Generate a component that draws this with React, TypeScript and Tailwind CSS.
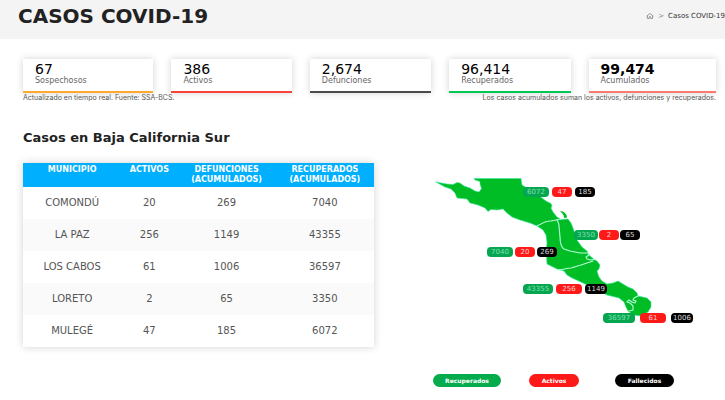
import React from 'react'

interface Stat {
  value: string
  label: string
  border: string
  weight: string
}

const stats: Stat[] = [
  { value: '67', label: 'Sospechosos', border: 'border-[#ffa92e]', weight: 'font-normal' },
  { value: '386', label: 'Activos', border: 'border-[#f9423a]', weight: 'font-normal' },
  { value: '2,674', label: 'Defunciones', border: 'border-[#4a4a4a]', weight: 'font-normal' },
  { value: '96,414', label: 'Recuperados', border: 'border-[#00c853]', weight: 'font-normal' },
  { value: '99,474', label: 'Acumulados', border: 'border-[#fb7a70]', weight: 'font-bold' },
]

interface Municipio {
  name: string
  activos: number
  defunciones: number
  recuperados: number
  // lugar sobre el mapa y ancho de cada etiqueta
  pin: string
  widths: [string, string, string]
}

const municipios: Municipio[] = [
  { name: 'COMONDÚ', activos: 20, defunciones: 269, recuperados: 7040, pin: 'left-[57px] top-[77px] gap-[2px]', widths: ['w-[26px]', 'w-[20px]', 'w-[20px]'] },
  { name: 'LA PAZ', activos: 256, defunciones: 1149, recuperados: 43355, pin: 'left-[93px] top-[114px] gap-[3px]', widths: ['w-[30px]', 'w-[26px]', 'w-[22px]'] },
  { name: 'LOS CABOS', activos: 61, defunciones: 1006, recuperados: 36597, pin: 'left-[173px] top-[143px] gap-[5px]', widths: ['w-[32px]', 'w-[26px]', 'w-[22px]'] },
  { name: 'LORETO', activos: 2, defunciones: 65, recuperados: 3350, pin: 'left-[144px] top-[60px] gap-px', widths: ['w-[24px]', 'w-[20px]', 'w-[20px]'] },
  { name: 'MULEGÉ', activos: 47, defunciones: 185, recuperados: 6072, pin: 'left-[93px] top-[17px] gap-[3px]', widths: ['w-[26px]', 'w-[20px]', 'w-[20px]'] },
]

const HomeIcon: React.FC = () => (
  <svg viewBox="0 0 16 12" className="w-2 h-[6px]" fill="none" stroke="#777" strokeWidth="1.4">
    <path d="M1 6.5 8 1l7 5.5M3 5.5V11h3.5V7.5h3V11H13V5.5" />
  </svg>
)

const StatCard: React.FC<{ stat: Stat }> = ({ stat }) => (
  <div className={`bg-white border-b-2 shadow-[0_0_7px_rgba(0,0,0,0.18)] pl-3 pt-[2px] pb-[6px] ${stat.border}`}>
    <p className={`text-[14px] leading-4 text-black ${stat.weight}`}>{stat.value}</p>
    <p className="text-[8px] leading-2 text-[#666]">{stat.label}</p>
  </div>
)

const MapPin: React.FC<{ municipio: Municipio }> = ({ municipio }) => {
  const { pin, widths, recuperados, activos, defunciones } = municipio
  const badge = 'h-[10px] rounded-[4px] text-center text-[7px] leading-[10px]'
  return (
    <div className={`absolute flex ${pin}`}>
      <span className={`${badge} ${widths[0]} bg-[#06a650] text-[#7ee0ac]`}>{recuperados}</span>
      <span className={`${badge} ${widths[1]} bg-[#ff1a1a] text-[#ffd0d0]`}>{activos}</span>
      <span className={`${badge} ${widths[2]} bg-black text-[#ddd]`}>{defunciones}</span>
    </div>
  )
}

const BajaMap: React.FC = () => (
  <div className="relative w-[270px] h-40">
    <svg viewBox="430 170 270 160" className="w-full h-full" strokeLinejoin="round" strokeLinecap="round">
      <path
        fill="#00bd26"
        stroke="#35e6a0"
        strokeWidth="0.6"
        d="M436 182 447 184 453 184.5 457 182.5 460 183 464 186 470 188 475 191 479 192 481.500 188.500 480 184 480 181.500 475 180 474 178.500H521L522 185 527 188 535 193 542 198 546 201 551 203.500 552 206 551 208 553 212 557 217 561 219.500 568 219 571 223 573 228 577 240 582 247 587 251 590 256 595 260 597 261 600 265 599 269 597 271 599 277 602 281 607 284 613 283 618 281 628 287 633 289 637 293 638 296 647 298 651 302 651 307 648 312 641 316 633 315 628 311 626 307 624 302 619 298 607 295 597 290 583 283 572 278 567 275 564 271 557 269 547 264 546 250 547 243 546 235 543 230 537 226 530 223 520 220 512 217 507 213 503 209 497 210 491 209.500 488 211.500 485 208 478 205 470 203 467 199 457 198 455 193 451 189 445 187Z"
      />
      <path fill="#00bd26" d="M560 211c4 0 7 3 7 6.500l-3 .5c0-3-1-4-4-7Z" />
      <g fill="none" stroke="#b4ffda" strokeWidth="1.1">
        <path strokeDasharray="2 1" d="M537 226c4-2 8-5 14-5l10-2" />
        <path d="M557 220c1 2 2 3 2 6l1 11c0 6 1 10 4 12l6 2 10 2 8 0 1 2-3 2 1 2 4 1 5-1" />
        <path d="M557 270c6 0 9-2 14-2l10-3 12-4" />
        <path d="M638 296l-4 2-1 2 3 1-1 2-3-1-3-2-2 2 3 1 3 3v4l-4 1" />
      </g>
    </svg>
    {municipios.map(m => (
      <MapPin key={m.name} municipio={m} />
    ))}
  </div>
)

const App: React.FC = () => {
  return (
    <div className="bg-white overflow-hidden font-['DejaVu_Sans',sans-serif]">
      {/* Encabezado */}
      <header className="flex items-center justify-between bg-[#f4f4f4] h-[39px] pl-[18px] pb-2 whitespace-nowrap">
        <h1 className="text-[20px] leading-5 font-bold text-[#222]">CASOS COVID-19</h1>
        <nav className="flex items-center gap-1 text-[7px] leading-2 text-[#333]" aria-label="Ruta">
          <a href="#" aria-label="Inicio"><HomeIcon /></a>
          <span className="text-[#888]">&gt;</span>
          <span>Casos COVID-19</span>
        </nav>
      </header>

      <main className="pl-[23px] pr-[9px] pt-5">
        {/* Totales */}
        <section className="grid grid-cols-[130fr_120fr_121fr_121fr_127fr] gap-[18px]">
          {stats.map(stat => (
            <StatCard key={stat.label} stat={stat} />
          ))}
        </section>
        <div className="flex justify-between font-[Inter,sans-serif] text-[7px] leading-[10px] text-[#555]">
          <p>Actualizado en tiempo real. Fuente: SSA-BCS.</p>
          <p>Los casos acumulados suman los activos, defunciones y recuperados.</p>
        </div>

        <h2 className="mt-7 text-[13px] leading-[14px] font-bold text-[#222]">Casos en Baja California Sur</h2>

        <div className="grid grid-cols-[351fr_342fr] items-start mt-[18px]">
          {/* Tabla por municipio */}
          <table className="w-full table-fixed text-center shadow-[0_0_8px_rgba(0,0,0,0.18)]">
            <colgroup>
              <col className="w-[28%]" />
              <col className="w-[16%]" />
              <col className="w-[28%]" />
              <col className="w-[28%]" />
            </colgroup>
            <thead className="bg-[#00b0ff] text-white text-[8px] leading-[10px] align-top">
              <tr className="h-6">
                <th scope="col" className="pt-[2px]">MUNICIPIO</th>
                <th scope="col" className="pt-[2px]">ACTIVOS</th>
                <th scope="col" className="pt-[2px]">DEFUNCIONES<br />(ACUMULADOS)</th>
                <th scope="col" className="pt-[2px]">RECUPERADOS<br />(ACUMULADOS)</th>
              </tr>
            </thead>
            <tbody className="text-[10px] leading-3 text-[#555]">
              {municipios.map(m => (
                <tr key={m.name} className="h-8 bg-white even:bg-[#fafafa]">
                  <td>{m.name}</td>
                  <td>{m.activos}</td>
                  <td>{m.defunciones}</td>
                  <td>{m.recuperados}</td>
                </tr>
              ))}
            </tbody>
          </table>

          {/* Mapa y leyenda */}
          <div className="pl-14 pt-[7px]">
            <BajaMap />
            <div className="flex mt-11 pl-[3px] text-center text-[6px] leading-[13px] font-bold text-white">
              <span className="w-[68px] rounded-full bg-[#06ab4b]">Recuperados</span>
              <span className="w-[50px] ml-7 rounded-full bg-[#ff1a1a]">Activos</span>
              <span className="w-[59px] ml-9 rounded-full bg-black">Fallecidos</span>
            </div>
          </div>
        </div>
      </main>
    </div>
  )
}

export default App
